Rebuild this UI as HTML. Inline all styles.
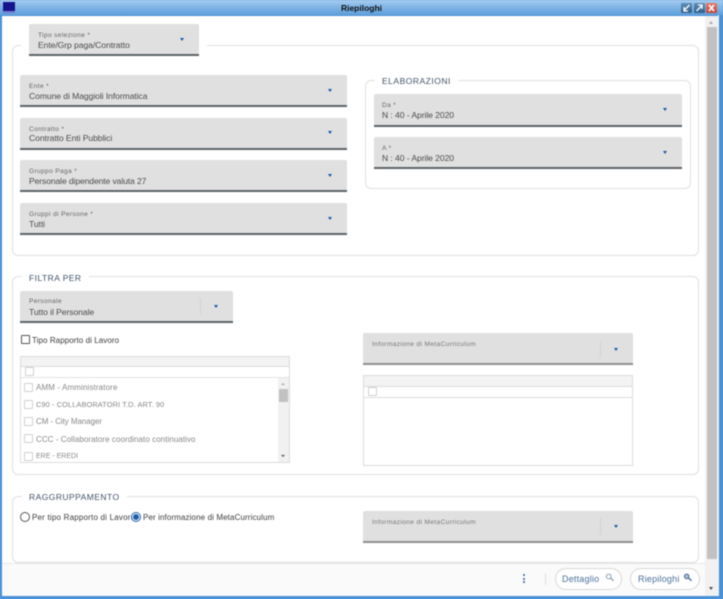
<!DOCTYPE html>
<html lang="it"><head><meta charset="utf-8"><title>Riepiloghi</title>
<style>
html,body{margin:0;padding:0;width:723px;height:599px;overflow:hidden;background:#5f9fdc}
body{font-family:"Liberation Sans",sans-serif;position:relative}
#w{position:absolute;left:0;top:0;width:723px;height:599px;filter:blur(.5px);overflow:hidden;background:#fff}
#w div,#w span,#w svg{position:absolute;box-sizing:border-box}
.tb{left:0;top:0;width:723px;height:16px;background:linear-gradient(#a8cdf0,#82b6e6 45%,#5f9fdc);border-bottom:1px solid #4f90d2}
.bl{left:0;top:15px;width:2px;height:584px;background:#4a90d6}
.br{left:718px;top:15px;width:5px;height:584px;background:linear-gradient(90deg,#e8eff6 0,#e8eff6 20%,#4a90d6 20%)}
.bb{left:0;top:596px;width:723px;height:3px;background:#4a90d6}
.ttl{left:0;width:723px;top:2px;text-align:center;font:bold 8.5px/12px "Liberation Sans",sans-serif;color:#111}
.box{border:1px solid #e0e0e0;border-radius:6px;background:#fff}
.leg{background:#fff;padding:0 7px;font-size:8.5px;line-height:12px;letter-spacing:.45px;color:#3f5268;white-space:nowrap}
.f{background:#e0e0e0;border-bottom:2px solid #5c6367;border-radius:2px 2px 0 0}
.f.dis{border-bottom-color:#8e8e8e}
.l{font-size:6.6px;line-height:8px;color:#666;letter-spacing:.35px;white-space:nowrap;margin-top:1px}
.v{font-size:8.6px;line-height:11px;color:#4c4c4c;letter-spacing:-.08px;white-space:nowrap;margin-top:1px}
.ar{width:0;height:0;border-left:2.6px solid transparent;border-right:2.6px solid transparent;border-top:3.2px solid #1556a8}
.sep{width:1px;background:#d2d2d2}
.t{font-size:8px;line-height:10px;white-space:nowrap;color:#3c3c3c;letter-spacing:.2px;margin-top:1px}
.i{font-size:8px;line-height:10px;white-space:nowrap;color:#888;letter-spacing:.12px;margin-top:1px}
.cb{width:9px;height:9px;background:#fff;border:1px solid #d0d0d0;border-radius:1px}
.btn{border:1px solid #d8d8d8;border-radius:11px;background:#fff;font-size:9px;color:#4a6f98;letter-spacing:.2px}
</style></head><body><div id="w">
<div class="tb"></div>
<div style="left:3px;top:2px;width:12px;height:11px;background:#14148c;border-bottom:2px solid #7a7ad0"></div>
<div class="ttl">Riepiloghi</div>
<div style="left:681px;top:3px;width:11px;height:10px;background:linear-gradient(#5f8fb8,#2f5f88);border-radius:1px"></div>
<svg style="left:681px;top:3px" width="11" height="10"><path d="M8.5 2 3.5 7M3 4v4h4" stroke="#fff" stroke-width="1.3" fill="none"/></svg>
<div style="left:694px;top:3px;width:11px;height:10px;background:linear-gradient(#5f8fb8,#2f5f88);border-radius:1px"></div>
<svg style="left:694px;top:3px" width="11" height="10"><path d="M2.5 8 7.5 3M4 2h4v4" stroke="#fff" stroke-width="1.3" fill="none"/></svg>
<div style="left:706px;top:3px;width:11px;height:10px;background:linear-gradient(#e87a6a,#c04838);border-radius:1px"></div>
<svg style="left:706px;top:3px" width="11" height="10"><path d="M3 2 8 8M8 2 3 8" stroke="#fff" stroke-width="1.6" fill="none"/></svg>
<div class="bl"></div><div class="br"></div><div class="bb"></div>

<!-- scrollbar -->
<div style="left:705px;top:16px;width:13px;height:580px;background:#f1f1f1"></div>
<div style="left:707px;top:27px;width:10px;height:532px;background:#c1c1c1"></div>
<div style="left:709px;top:21px;width:0;height:0;border-left:2.5px solid transparent;border-right:2.5px solid transparent;border-bottom:3px solid #aaa"></div>
<div style="left:709px;top:587px;width:0;height:0;border-left:2.5px solid transparent;border-right:2.5px solid transparent;border-top:3px solid #505050"></div>

<!-- section 1 -->
<div class="box" style="left:12px;top:45px;width:687px;height:211px"></div>
<div style="left:21px;top:40px;width:186px;height:12px;background:#fff"></div>
<div class="f" style="left:29px;top:24px;width:170px;height:32px"></div>
<div class="l" style="left:38px;top:31px">Tipo selezione *</div>
<div class="v" style="left:38px;top:39px">Ente/Grp paga/Contratto</div>
<div class="ar" style="left:180px;top:38px"></div>

<div class="f" style="left:20px;top:75px;width:327px;height:32px"></div>
<div class="l" style="left:29px;top:82px">Ente *</div>
<div class="v" style="left:29px;top:90px">Comune di Maggioli Informatica</div>
<div class="ar" style="left:328px;top:89px"></div>

<div class="f" style="left:20px;top:118px;width:327px;height:32px"></div>
<div class="l" style="left:29px;top:125px">Contratto *</div>
<div class="v" style="left:29px;top:132px">Contratto Enti Pubblici</div>
<div class="ar" style="left:328px;top:131px"></div>

<div class="f" style="left:20px;top:160px;width:327px;height:32px"></div>
<div class="l" style="left:29px;top:167px">Gruppo Paga *</div>
<div class="v" style="left:29px;top:175px;letter-spacing:-.12px">Personale dipendente valuta 27</div>
<div class="ar" style="left:328px;top:174px"></div>

<div class="f" style="left:20px;top:203px;width:327px;height:32px"></div>
<div class="l" style="left:29px;top:210px">Gruppi di Persone *</div>
<div class="v" style="left:29px;top:218px">Tutti</div>
<div class="ar" style="left:328px;top:217px"></div>

<div class="box" style="left:365px;top:80px;width:326px;height:109px"></div>
<div class="leg" style="left:375px;top:75px;letter-spacing:.5px">ELABORAZIONI</div>
<div class="f" style="left:374px;top:94px;width:308px;height:33px"></div>
<div class="l" style="left:382px;top:101px">Da *</div>
<div class="v" style="left:382px;top:109px">N : 40 - Aprile 2020</div>
<div class="ar" style="left:663px;top:108px"></div>
<div class="f" style="left:374px;top:137px;width:308px;height:32px"></div>
<div class="l" style="left:382px;top:144px">A *</div>
<div class="v" style="left:382px;top:152px">N : 40 - Aprile 2020</div>
<div class="ar" style="left:663px;top:151px"></div>

<!-- filtra per -->
<div class="box" style="left:12px;top:276px;width:687px;height:199px"></div>
<div class="leg" style="left:22px;top:272px">FILTRA PER</div>
<div class="f" style="left:20px;top:291px;width:213px;height:32px"></div>
<div class="l" style="left:29px;top:298px;margin-top:0">Personale</div>
<div class="v" style="left:29px;top:306px">Tutto il Personale</div>
<div class="sep" style="left:200px;top:298px;height:17px"></div>
<div class="ar" style="left:214px;top:305px"></div>

<div style="left:21px;top:335px;width:9px;height:9px;border:1.2px solid #555;border-radius:1px;background:#fff"></div>
<div class="t" style="left:32px;top:335px;letter-spacing:.07px">Tipo Rapporto di Lavoro</div>

<div style="left:20px;top:356px;width:270px;height:107px;border:1px solid #dcdcdc;background:#fff"></div>
<div style="left:21px;top:357px;width:268px;height:10px;background:#f3f3f3;border-bottom:1px solid #dcdcdc"></div>
<div style="left:21px;top:377px;width:268px;height:1px;background:#e4e4e4"></div>
<div class="cb" style="left:25px;top:367px"></div>
<div style="left:278px;top:378px;width:11px;height:84px;background:#f1f1f1"></div>
<div style="left:279px;top:389px;width:9px;height:13px;background:#c1c1c1"></div>
<div style="left:281px;top:383px;width:0;height:0;border-left:2.3px solid transparent;border-right:2.3px solid transparent;border-bottom:2.6px solid #aaa"></div>
<div style="left:281px;top:455px;width:0;height:0;border-left:2.3px solid transparent;border-right:2.3px solid transparent;border-top:2.6px solid #505050"></div>

<div class="cb" style="left:24px;top:383px"></div><div class="i" style="left:36px;top:382px">AMM - Amministratore</div>
<div class="cb" style="left:24px;top:400px"></div><div class="i" style="left:36px;top:399px;font-size:7.4px;letter-spacing:.1px">C90 - COLLABORATORI T.D. ART. 90</div>
<div class="cb" style="left:24px;top:417px"></div><div class="i" style="left:36px;top:416px;letter-spacing:-.07px">CM - City Manager</div>
<div class="cb" style="left:24px;top:434px"></div><div class="i" style="left:36px;top:434px;letter-spacing:.06px">CCC - Collaboratore coordinato continuativo</div>
<div class="cb" style="left:24px;top:452px"></div><div class="i" style="left:36px;top:451px;font-size:7px;letter-spacing:0">ERE - EREDI</div>

<div class="f dis" style="left:363px;top:333px;width:270px;height:32px"></div>
<div class="l" style="left:372px;top:340px;color:#777">Informazione di MetaCurriculum</div>
<div class="sep" style="left:600px;top:341px;height:16px"></div>
<div class="ar" style="left:614px;top:348px"></div>

<div style="left:363px;top:375px;width:270px;height:91px;border:1px solid #dcdcdc;background:#fff"></div>
<div style="left:364px;top:376px;width:268px;height:11px;background:#f3f3f3;border-bottom:1px solid #dcdcdc"></div>
<div style="left:364px;top:397px;width:268px;height:1px;background:#dcdcdc"></div>
<div class="cb" style="left:368px;top:387px"></div>

<!-- raggruppamento -->
<div class="box" style="left:12px;top:496px;width:687px;height:67px"></div>
<div class="leg" style="left:22px;top:491px">RAGGRUPPAMENTO</div>
<div style="left:20px;top:512px;width:10px;height:10px;border:1.3px solid #555;border-radius:50%;background:#fff"></div>
<div class="t" style="left:32px;top:512px">Per tipo Rapporto di Lavoro</div>
<div style="left:131px;top:512px;width:10px;height:10px;border:1.3px solid #1f5fa8;border-radius:50%;background:#fff"></div>
<div style="left:133px;top:514px;width:6px;height:6px;border-radius:50%;background:#1f5fa8"></div>
<div class="t" style="left:143px;top:512px;letter-spacing:.11px">Per informazione di MetaCurriculum</div>

<div class="f dis" style="left:363px;top:511px;width:270px;height:32px"></div>
<div class="l" style="left:372px;top:518px;color:#777">Informazione di MetaCurriculum</div>
<div class="sep" style="left:600px;top:518px;height:17px"></div>
<div class="ar" style="left:614px;top:525px"></div>

<!-- footer -->
<div style="left:2px;top:563px;width:703px;height:33px;background:#fafafa;border-top:1px solid #e6e6e6"></div>
<div style="left:523px;top:574px;width:2px;height:2px;background:#2f5f98;border-radius:50%"></div>
<div style="left:523px;top:578px;width:2px;height:2px;background:#2f5f98;border-radius:50%"></div>
<div style="left:523px;top:581px;width:2px;height:2px;background:#2f5f98;border-radius:50%"></div>
<div class="sep" style="left:545px;top:573px;height:12px;background:#dedede"></div>
<div class="btn" style="left:555px;top:568px;width:67px;height:22px"></div>
<div class="t" style="left:562px;top:573px;margin-top:0;font-size:9px;line-height:12px;color:#4a6f98">Dettaglio</div>
<svg style="left:605px;top:573px" width="10" height="9"><circle cx="3.7" cy="3.4" r="2.3" fill="none" stroke="#8aa0b8" stroke-width="1"/><path d="M5.5 5 8.5 7.7" stroke="#8aa0b8" stroke-width="1.4"/></svg>
<div class="btn" style="left:630px;top:568px;width:70px;height:22px"></div>
<div class="t" style="left:638px;top:573px;margin-top:0;font-size:9px;line-height:12px;color:#4a6f98">Riepiloghi</div>
<svg style="left:683px;top:573px" width="10" height="9"><circle cx="3.7" cy="3.4" r="2.3" fill="#a8bcd4" stroke="#4a6f98" stroke-width="1"/><path d="M5.5 5 8.5 7.7" stroke="#4a6f98" stroke-width="1.4"/></svg>
</div></body></html>
